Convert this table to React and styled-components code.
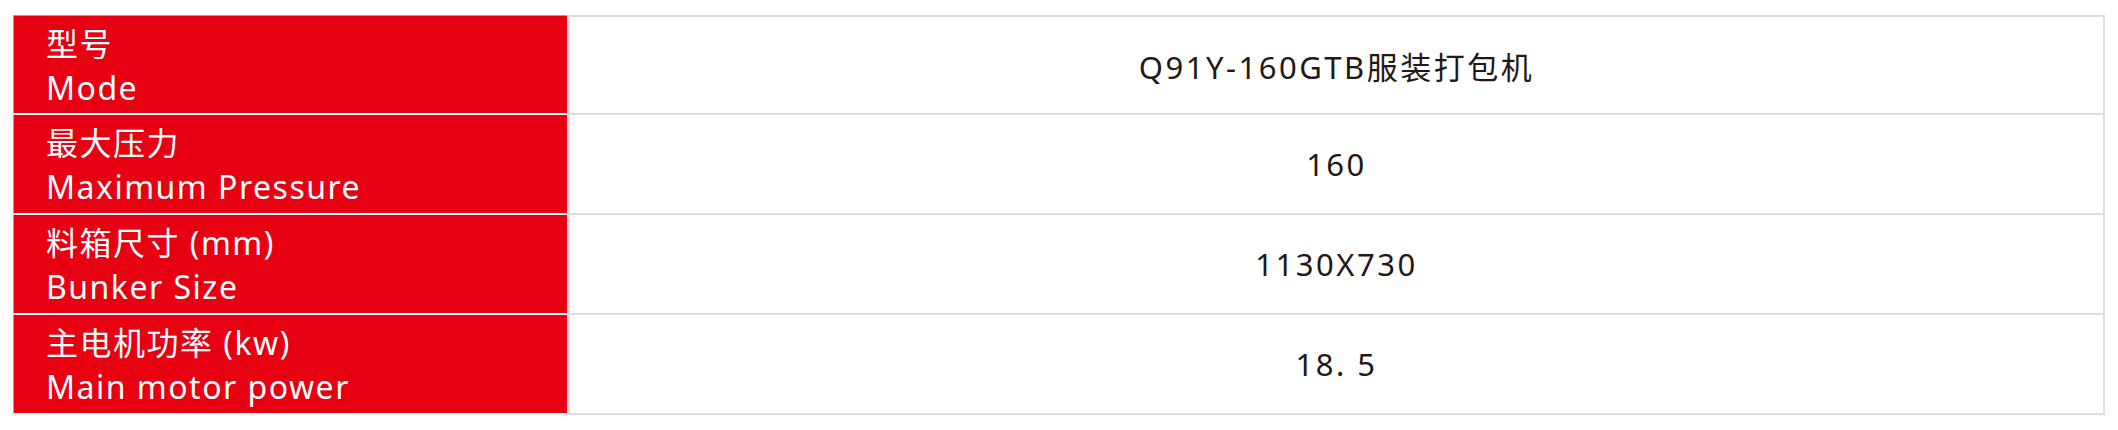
import React from "react";
import styled, { createGlobalStyle } from "styled-components";

const GlobalStyle = createGlobalStyle`
  html, body {
    margin: 0;
    padding: 0;
    background: #ffffff;
  }
`;

const Sheet = styled.div`
  width: 2092px;
  margin: 15px 0 0 13px;
  display: flex;
  flex-direction: column;
`;

const Row = styled.div`
  display: grid;
  grid-template-columns: 554px 1fr;
  height: 100px;
`;

const Label = styled.div`
  background: #e60012;
  color: #ffffff;
  border-bottom: 2px solid #ffffff;
  border-left: 1px solid #f07c84;
  border-top: ${(p) => (p.first ? "1px solid #f07c84" : "0")};
  padding: 2px 0 0 32px;
  display: flex;
  flex-direction: column;
  justify-content: center;
  font-family: "Noto Sans", "Noto Sans CJK SC", sans-serif;
  font-size: 32px;
  line-height: 44px;
  letter-spacing: 1.5px;
  white-space: nowrap;
`;

const Value = styled.div`
  border-left: 3px solid #dddddd;
  border-right: 2px solid #dddddd;
  border-bottom: 2px solid #dddddd;
  border-top: ${(p) => (p.first ? "2px solid #dddddd" : "0")};
  display: flex;
  align-items: center;
  justify-content: center;
  color: #231815;
  font-family: "Noto Sans", "Noto Sans CJK SC", sans-serif;
  font-size: 31px;
  letter-spacing: 2.5px;
`;

const specs = [
  { cn: "型号", en: "Mode", value: "Q91Y-160GTB服装打包机" },
  { cn: "最大压力", en: "Maximum Pressure", value: "160" },
  { cn: "料箱尺寸 (mm)", en: "Bunker Size", value: "1130X730" },
  { cn: "主电机功率 (kw)", en: "Main motor power", value: "18. 5" },
];

export default function App() {
  return (
    <>
      <GlobalStyle />
      <Sheet>
        {specs.map((s, i) => (
          <Row key={s.en}>
            <Label first={i === 0}>
              <span>{s.cn}</span>
              <span>{s.en}</span>
            </Label>
            <Value first={i === 0}>{s.value}</Value>
          </Row>
        ))}
      </Sheet>
    </>
  );
}
